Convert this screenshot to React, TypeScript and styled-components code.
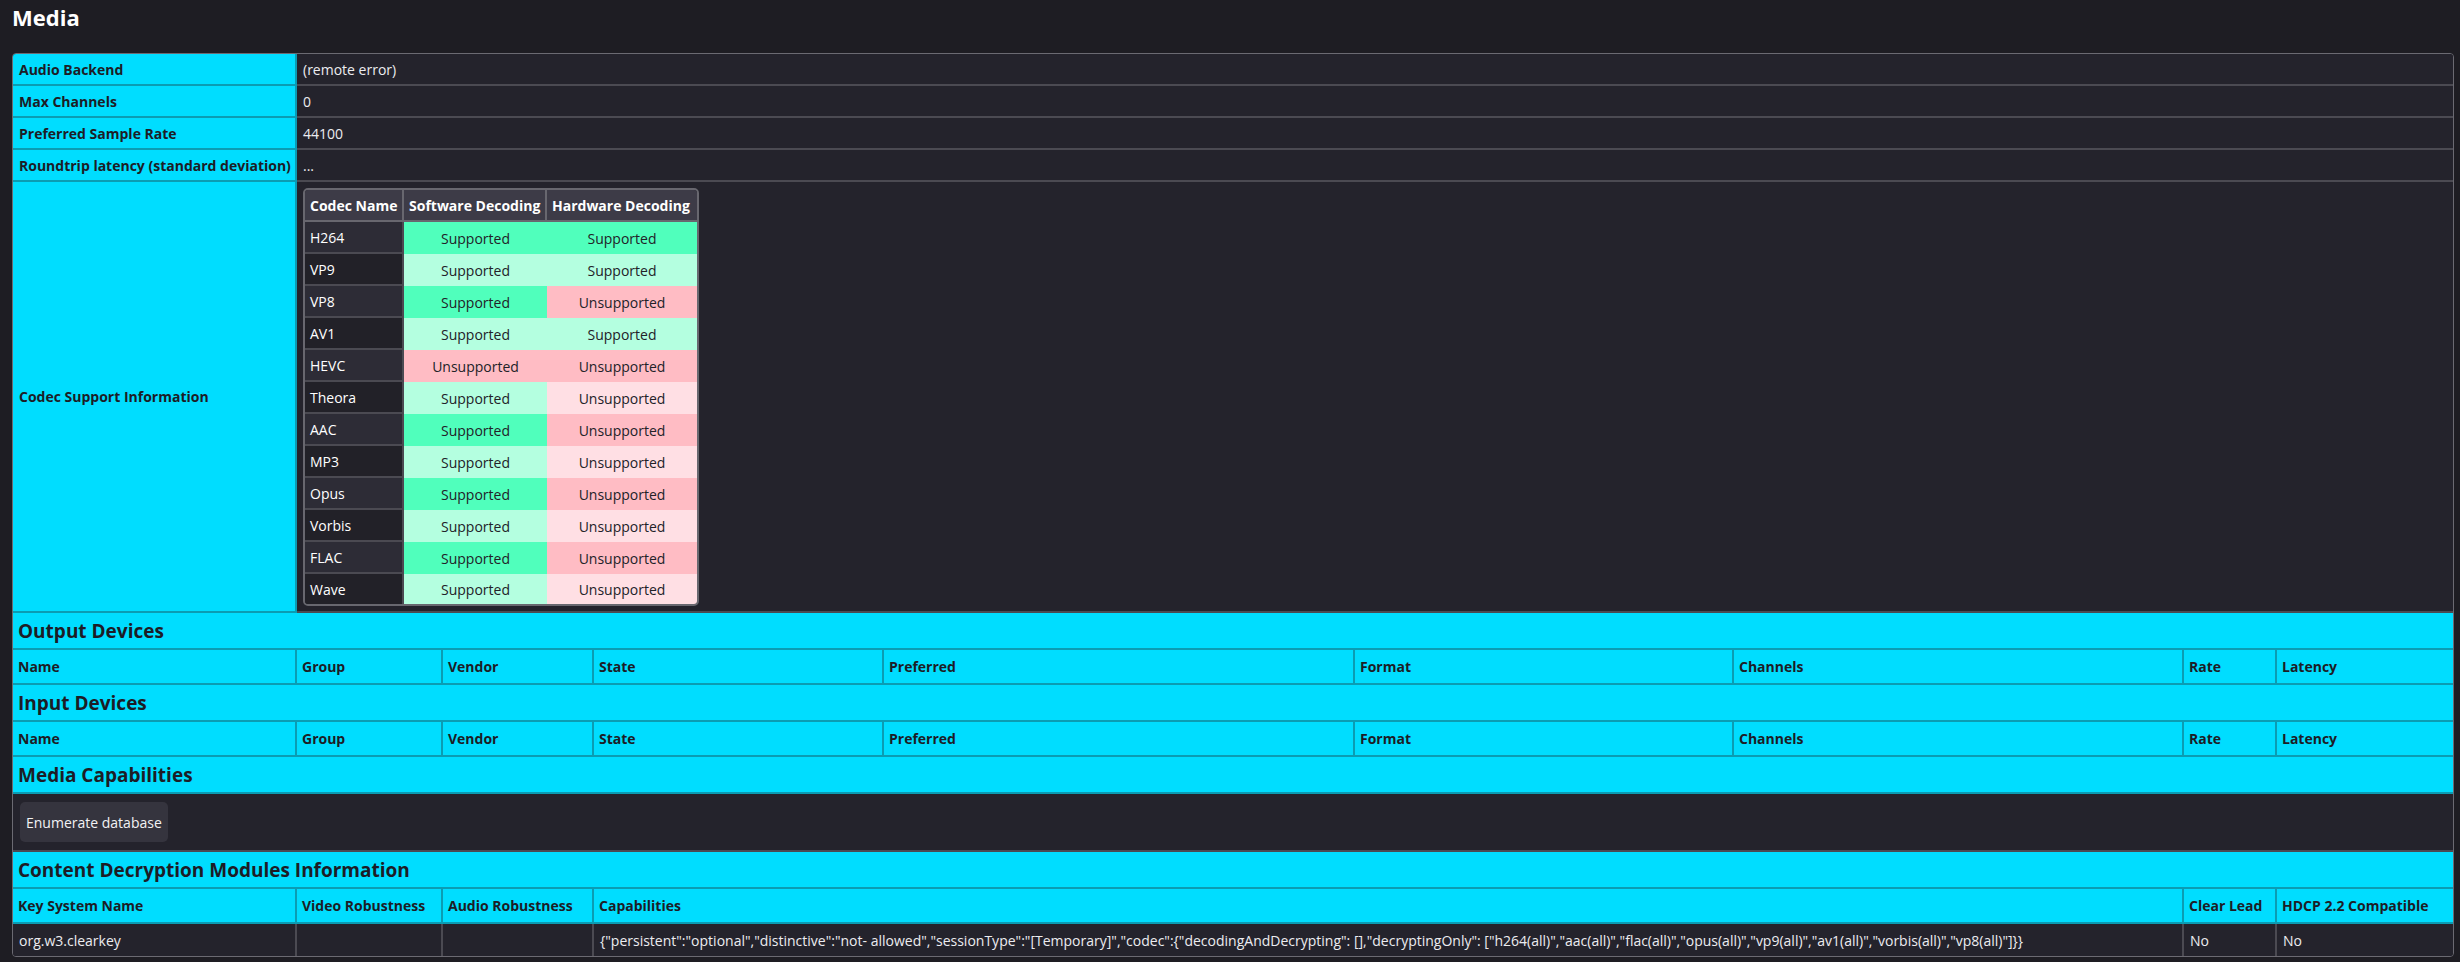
import React from "react"
import styled, { createGlobalStyle } from "styled-components"

const GlobalStyle = createGlobalStyle`
  html, body {
    margin: 0;
    padding: 0;
    background: #1e1d23;
    color: #e8e8ec;
    font-family: "Open Sans", "Noto Sans", sans-serif;
    font-size: 14px;
  }
`

const Page = styled.div`
  padding: 0 9px 0 12px;
`

const Heading = styled.h2`
  margin: 0;
  padding: 2px 0 0 0;
  height: 53px;
  box-sizing: border-box;
  font-size: 22px;
  font-weight: 700;
  color: #ffffff;
`

const Table = styled.table`
  width: 2439px;
  table-layout: fixed;
  border-collapse: separate;
  border-spacing: 0;
  border: 1px solid #6b6a72;
  border-radius: 4px;
  overflow: hidden;

  tr:last-child > td {
    border-bottom: none;
  }
  tr > td:last-child {
    border-right: none;
  }
`

const Row = styled.tr<{ $h: number }>`
  height: ${p => p.$h}px;
`

const Label = styled.td`
  background: #00ddff;
  color: #1d1c26;
  font-weight: 700;
  padding: 0 6px;
  vertical-align: middle;
  border-right: 2px solid #0b9cb3;
  border-bottom: 2px solid #0b9cb3;
  white-space: nowrap;
  overflow: hidden;
`

const Value = styled.td`
  background: #24232c;
  color: #ececf0;
  padding: 0 6px;
  border-right: 2px solid #4b4a52;
  border-bottom: 2px solid #4b4a52;
  white-space: nowrap;
`

const CodecCell = styled.td`
  background: #24232c;
  padding: 6px 6px 5px 6px;
  border-bottom: 2px solid #4b4a52;
  vertical-align: top;
`

const Section = styled.td`
  background: #00ddff;
  color: #1d1c26;
  font-size: 19px;
  font-weight: 700;
  padding: 0 5px;
  border-bottom: 2px solid #0b9cb3;
`

const HeadCell = styled.td`
  background: #00ddff;
  color: #1d1c26;
  font-weight: 700;
  padding: 0 5px;
  border-right: 2px solid #0b9cb3;
  border-bottom: 2px solid #0b9cb3;
  white-space: nowrap;
  overflow: hidden;
`

const ButtonCell = styled.td`
  background: #24232c;
  padding: 0 7px;
  border-bottom: 2px solid #4b4a52;
`

const Button = styled.button`
  height: 40px;
  padding: 0 6px;
  border: none;
  border-radius: 5px;
  background: #35343e;
  color: #f2f2f4;
  font-family: inherit;
  font-size: 14px;
`

const CodecTable = styled.table`
  border-collapse: separate;
  border-spacing: 0;
  border: 2px solid #68676f;
  border-radius: 5px;
  overflow: hidden;
  table-layout: fixed;
  width: 392px;
`

const CodecHead = styled.th`
  height: 30px;
  background: #3d3b47;
  color: #ffffff;
  font-weight: 700;
  text-align: left;
  padding: 0 5px;
  border-right: 2px solid #68676f;
  border-bottom: 2px solid #68676f;
  white-space: nowrap;
  &:last-child {
    border-right: none;
  }
`

const CodecName = styled.td<{ $odd: boolean }>`
  height: 30px;
  background: ${p => (p.$odd ? "#2d2c36" : "#222128")};
  color: #ffffff;
  padding: 0 5px;
  border-right: 2px solid #4b4a52;
  border-bottom: 2px solid #4b4a52;
  tr:last-child > & {
    border-bottom: none;
  }
`

const Status = styled.td<{ $ok: boolean; $odd: boolean }>`
  background: ${p =>
    p.$ok ? (p.$odd ? "#50ffbc" : "#b4ffe0") : p.$odd ? "#ffbcc4" : "#ffdfe4"};
  color: #222228;
  text-align: center;
  padding: 0 4px;
`

const codecs: [string, boolean, boolean][] = [
  ["H264", true, true],
  ["VP9", true, true],
  ["VP8", true, false],
  ["AV1", true, true],
  ["HEVC", false, false],
  ["Theora", true, false],
  ["AAC", true, false],
  ["MP3", true, false],
  ["Opus", true, false],
  ["Vorbis", true, false],
  ["FLAC", true, false],
  ["Wave", true, false],
]

const colWidths = [284, 146, 151, 290, 471, 379, 450, 93, 176]

const deviceCols = ["Name", "Group", "Vendor", "State", "Preferred", "Format", "Channels", "Rate", "Latency"]

const info: [string, string][] = [
  ["Audio Backend", "(remote error)"],
  ["Max Channels", "0"],
  ["Preferred Sample Rate", "44100"],
  ["Roundtrip latency (standard deviation)", "..."],
]

const capabilities =
  '{"persistent":"optional","distinctive":"not- allowed","sessionType":"[Temporary]","codec":{"decodingAndDecrypting": [],"decryptingOnly": ["h264(all)","aac(all)","flac(all)","opus(all)","vp9(all)","av1(all)","vorbis(all)","vp8(all)"]}}'

const DeviceSection = ({ title }: { title: string }) => (
  <>
    <Row $h={37}>
      <Section colSpan={9}>{title}</Section>
    </Row>
    <Row $h={35}>
      {deviceCols.map(c => (
        <HeadCell key={c}>{c}</HeadCell>
      ))}
    </Row>
  </>
)

const App = () => {
  return (
    <Page>
      <GlobalStyle />
      <Heading>Media</Heading>
      <Table>
        <colgroup>
          {colWidths.map((w, i) => (
            <col key={i} style={{ width: w }} />
          ))}
        </colgroup>
        <tbody>
          {info.map(([k, v]) => (
            <Row $h={32} key={k}>
              <Label>{k}</Label>
              <Value colSpan={8}>{v}</Value>
            </Row>
          ))}
          <Row $h={430}>
            <Label>Codec Support Information</Label>
            <CodecCell colSpan={8}>
              <CodecTable>
                <colgroup>
                  <col style={{ width: 99 }} />
                  <col style={{ width: 143 }} />
                  <col style={{ width: 150 }} />
                </colgroup>
                <thead>
                  <tr>
                    <CodecHead>Codec Name</CodecHead>
                    <CodecHead>Software Decoding</CodecHead>
                    <CodecHead>Hardware Decoding</CodecHead>
                  </tr>
                </thead>
                <tbody>
                  {codecs.map(([name, sw, hw], i) => (
                    <tr key={name}>
                      <CodecName $odd={i % 2 === 0}>{name}</CodecName>
                      <Status $ok={sw} $odd={i % 2 === 0}>
                        {sw ? "Supported" : "Unsupported"}
                      </Status>
                      <Status $ok={hw} $odd={i % 2 === 0}>
                        {hw ? "Supported" : "Unsupported"}
                      </Status>
                    </tr>
                  ))}
                </tbody>
              </CodecTable>
            </CodecCell>
          </Row>
          <DeviceSection title="Output Devices" />
          <DeviceSection title="Input Devices" />
          <Row $h={37}>
            <Section colSpan={9}>Media Capabilities</Section>
          </Row>
          <Row $h={58}>
            <ButtonCell colSpan={9}>
              <Button>Enumerate database</Button>
            </ButtonCell>
          </Row>
          <Row $h={37}>
            <Section colSpan={9}>Content Decryption Modules Information</Section>
          </Row>
          <Row $h={35}>
            <HeadCell>Key System Name</HeadCell>
            <HeadCell>Video Robustness</HeadCell>
            <HeadCell>Audio Robustness</HeadCell>
            <HeadCell colSpan={4}>Capabilities</HeadCell>
            <HeadCell>Clear Lead</HeadCell>
            <HeadCell>HDCP 2.2 Compatible</HeadCell>
          </Row>
          <Row $h={32}>
            <Value>org.w3.clearkey</Value>
            <Value></Value>
            <Value></Value>
            <Value colSpan={4}>{capabilities}</Value>
            <Value>No</Value>
            <Value>No</Value>
          </Row>
        </tbody>
      </Table>
    </Page>
  )
}

export default App
